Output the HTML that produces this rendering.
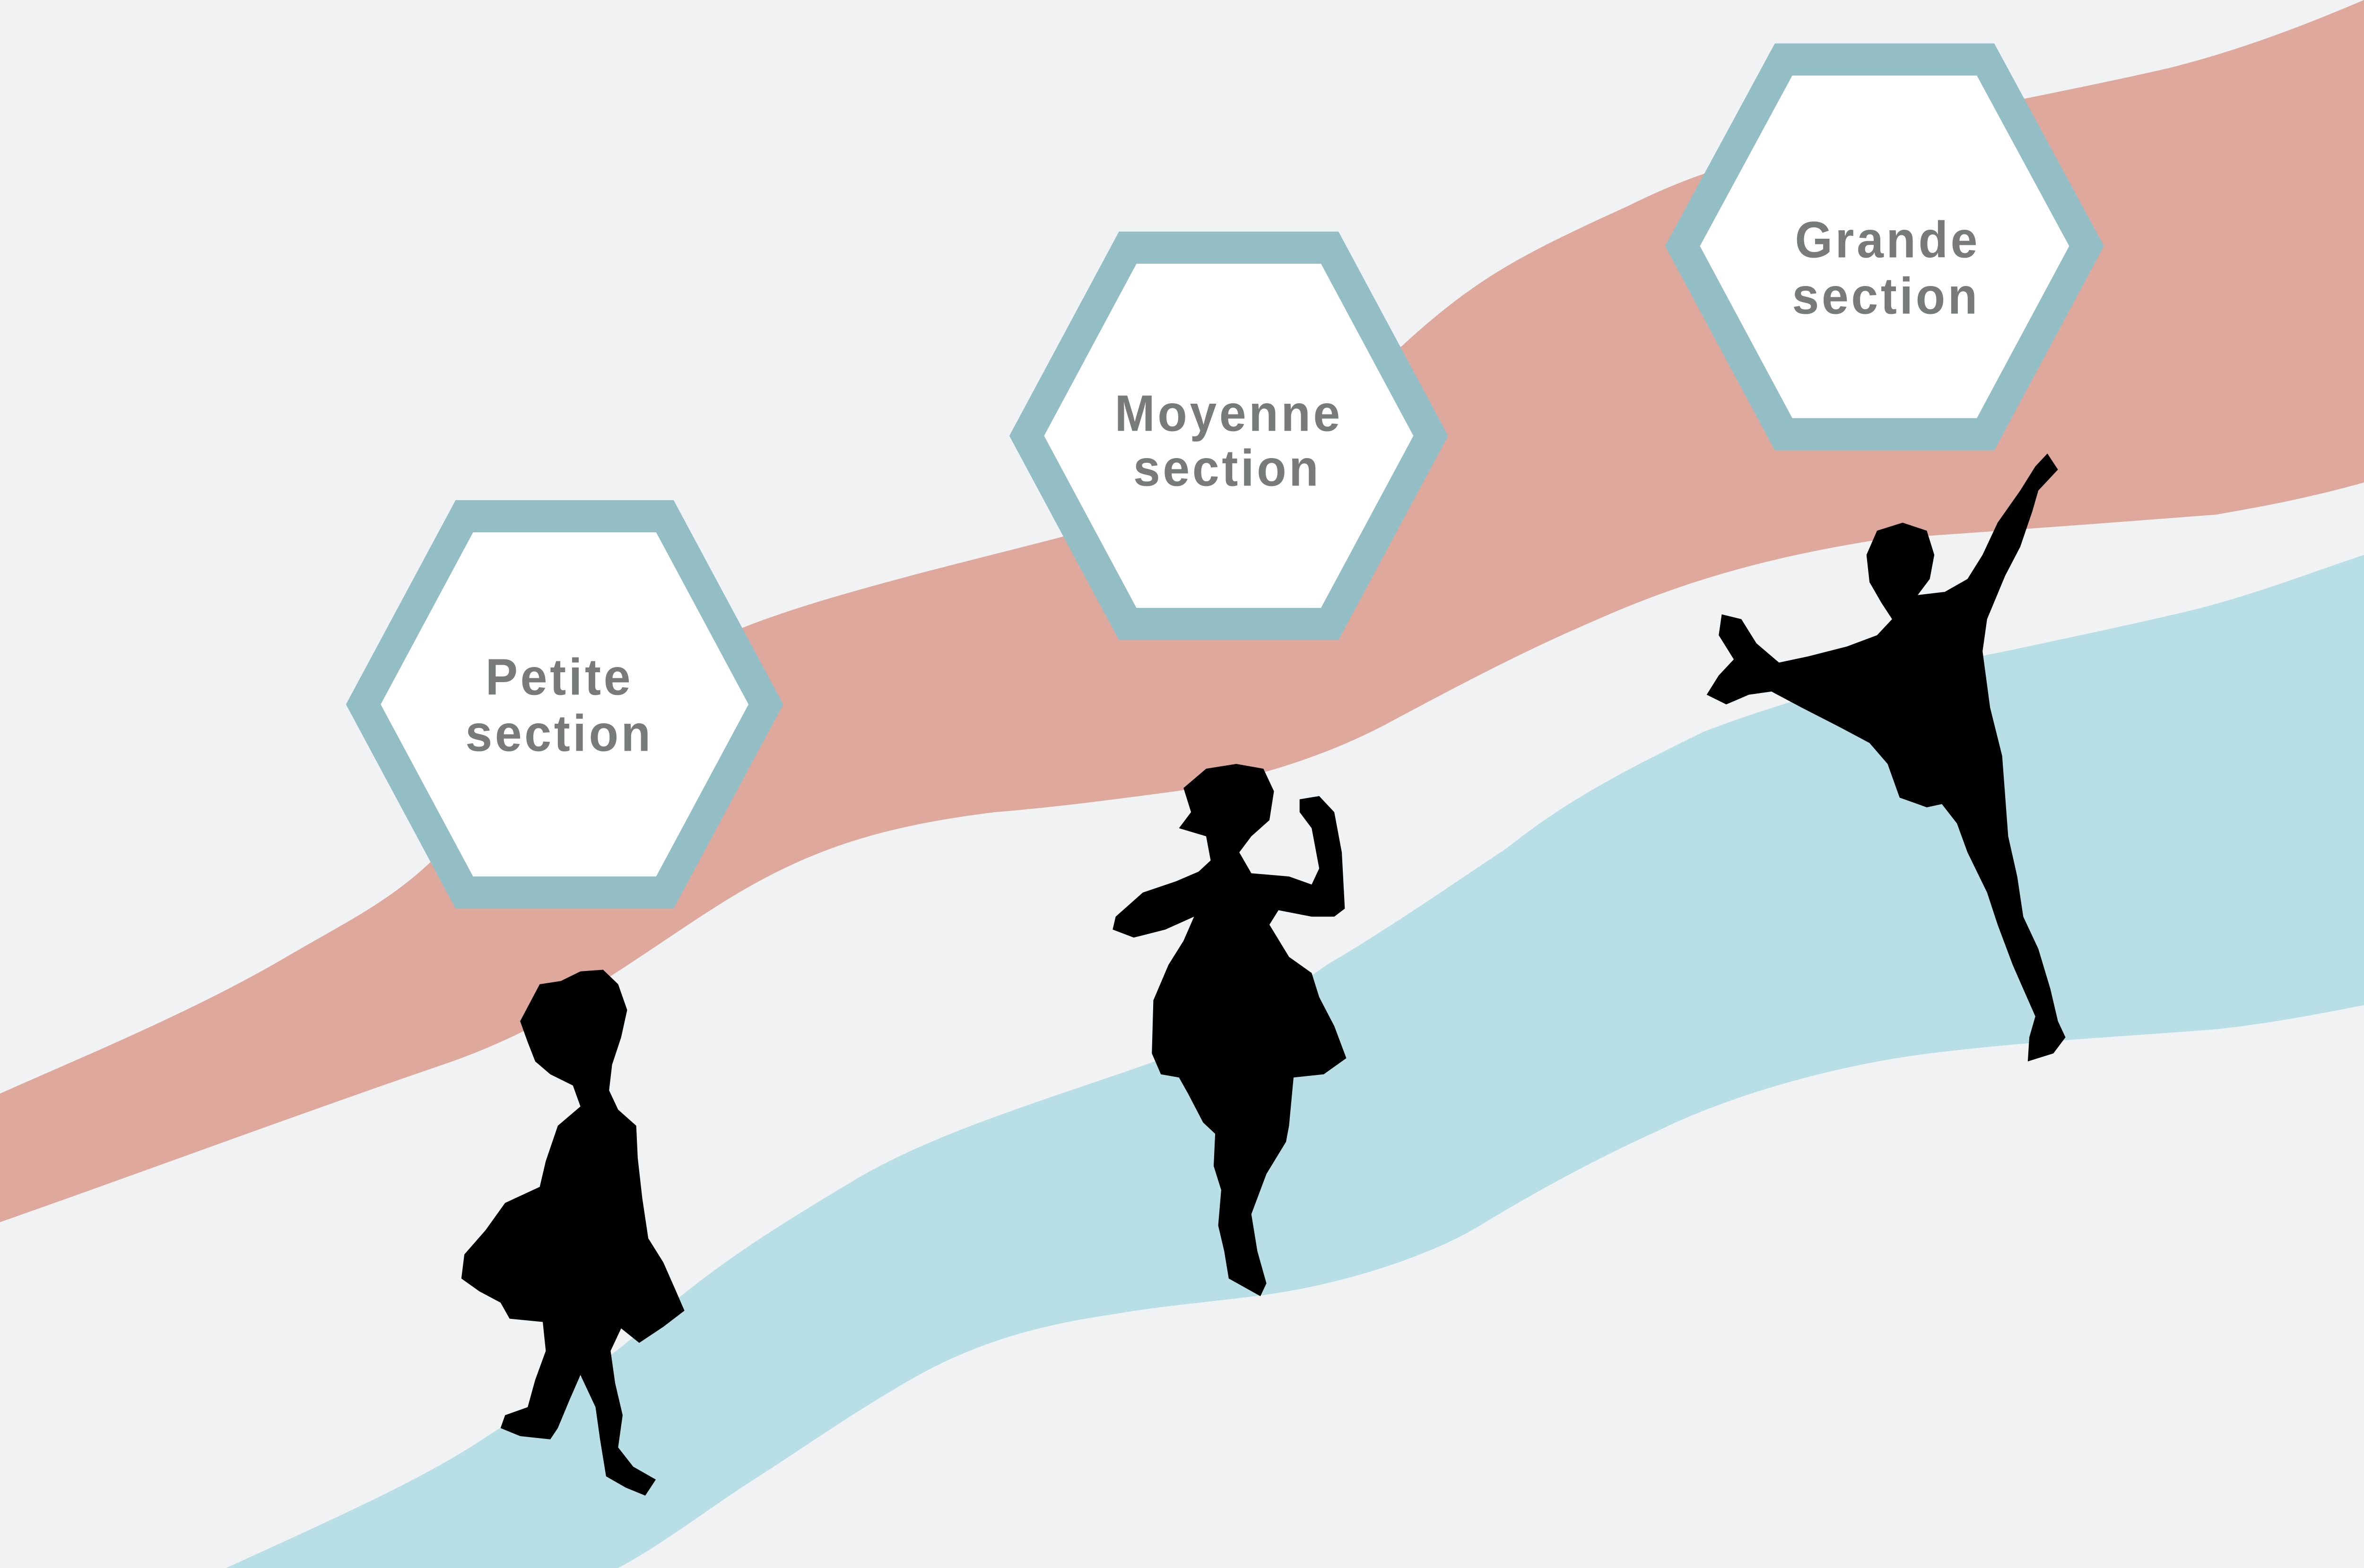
<!DOCTYPE html>
<html><head><meta charset="utf-8"><style>
html,body{margin:0;padding:0;background:#f1f2f4;width:100%;height:100%;overflow:hidden;}
svg{display:block;position:fixed;left:0;top:0;width:100vw;height:100vh;}
text{font-family:"Liberation Sans",sans-serif;font-weight:bold;fill:#797b7a;font-size:32px;letter-spacing:1.8px;}
</style></head><body>
<svg viewBox="0 0 1568 975" xmlns="http://www.w3.org/2000/svg" preserveAspectRatio="none">
<rect width="1568" height="975" fill="#f1f2f4"/>
<path fill="#dea99c" d="M0,680 C60,655 130,628 190,595 C230,573 260,560 290,532 C340,492 400,455 470,400 C520,375 640,350 720,330 C800,310 860,270 930,215 C980,172 1010,158 1080,128 C1140,100 1180,95 1250,80 C1320,65 1380,55 1440,42 C1490,30 1530,15 1568,0 L1568,300 C1530,310 1500,315 1470,320 C1400,325 1330,330 1250,335 C1180,345 1120,360 1060,385 C1010,405 970,425 920,450 C880,470 830,485 780,492 C740,497 700,502 660,505 C600,512 560,522 520,540 C480,558 450,580 400,610 C380,625 350,643 300,660 C200,692 100,727 0,760 Z"/>
<path fill="#b8dee6" d="M150,975 C220,945 280,920 320,895 C370,865 400,850 440,815 C480,783 520,760 570,732 C620,705 680,688 760,662 C810,645 850,620 880,600 C920,578 960,552 1000,527 C1040,497 1080,478 1130,455 C1200,430 1260,418 1330,405 C1390,393 1430,385 1460,378 C1500,368 1530,357 1568,345 L1568,625 C1530,632 1500,637 1470,640 C1400,645 1340,648 1280,655 C1220,662 1150,680 1100,703 C1060,720 1020,740 980,763 C940,785 880,800 840,805 C800,810 770,812 740,817 C680,825 640,838 600,860 C560,882 530,902 500,920 C470,938 440,960 410,975 Z"/>
<g fill="#fff" stroke="#93bec6" stroke-width="20" stroke-linejoin="miter">
<polygon points="241,438 308,321 441,321 508,438 441,555 308,555"/>
<polygon points="681,271 748,154 882,154 949,271 882,388 748,388"/>
<polygon points="1116,153 1183,37 1317,37 1384,153 1317,270 1183,270"/>
</g>
<text x="371" y="432" text-anchor="middle">Petite</text>
<text x="371" y="467" text-anchor="middle">section</text>
<text x="815" y="268" text-anchor="middle">Moyenne</text>
<text x="814" y="302" text-anchor="middle">section</text>
<text x="1252" y="160" text-anchor="middle">Grande</text>
<text x="1251" y="195" text-anchor="middle">section</text>
<g fill="#000">
<path d="M345,635 L358,612 L372,610 L385,604 L400,603 L410,612 L416,628 L412,645 L406,662 L404,678 L410,690 L422,700 L423,720 L426,745 L430,770 L440,785 L448,802 L454,815 L440,825 L424,835 L412,826 L405,840 L408,860 L413,880 L410,900 L420,912 L435,920 L428,930 L415,925 L402,918 L398,895 L395,875 L385,855 L378,870 L370,888 L365,895 L345,893 L332,888 L335,880 L350,875 L355,858 L362,840 L360,822 L338,820 L332,810 L318,803 L306,795 L308,780 L322,765 L335,748 L358,738 L362,722 L370,700 L385,688 L380,675 L365,668 L355,660 L350,648 Z"/>
<path d="M785,490 L800,478 L820,475 L838,478 L845,492 L842,510 L830,520 L822,530 L830,543 L855,545 L870,550 L875,540 L870,515 L862,505 L862,497 L875,495 L885,505 L890,530 L892,565 L885,570 L870,570 L848,566 L842,575 L855,595 L870,605 L875,620 L885,638 L893,658 L878,668 L858,670 L855,700 L853,710 L840,730 L830,755 L834,778 L840,798 L836,806 L815,795 L812,778 L808,762 L810,740 L805,725 L806,705 L798,698 L788,680 L782,670 L770,668 L764,655 L765,622 L775,600 L785,585 L792,570 L773,578 L752,583 L738,578 L740,570 L758,555 L780,548 L795,542 L803,535 L800,520 L782,515 L790,505 Z"/>
<path d="M1245,330 L1262,325 L1278,330 L1283,345 L1280,360 L1272,370 L1290,368 L1305,360 L1315,345 L1325,325 L1340,305 L1350,290 L1358,282 L1365,292 L1352,305 L1348,318 L1340,340 L1330,358 L1318,385 L1315,405 L1320,440 L1328,470 L1330,495 L1332,520 L1338,545 L1342,570 L1352,590 L1360,615 L1365,635 L1370,645 L1362,655 L1345,660 L1346,645 L1350,632 L1342,615 L1335,600 L1325,575 L1318,555 L1305,530 L1298,512 L1288,500 L1278,502 L1260,496 L1252,475 L1240,462 L1220,452 L1195,440 L1175,430 L1160,432 L1145,438 L1132,432 L1140,420 L1150,410 L1140,395 L1142,382 L1155,385 L1165,400 L1180,412 L1200,408 L1225,402 L1245,395 L1255,385 L1248,375 L1240,362 L1238,345 Z"/>
</g>
</svg>
</body></html>
